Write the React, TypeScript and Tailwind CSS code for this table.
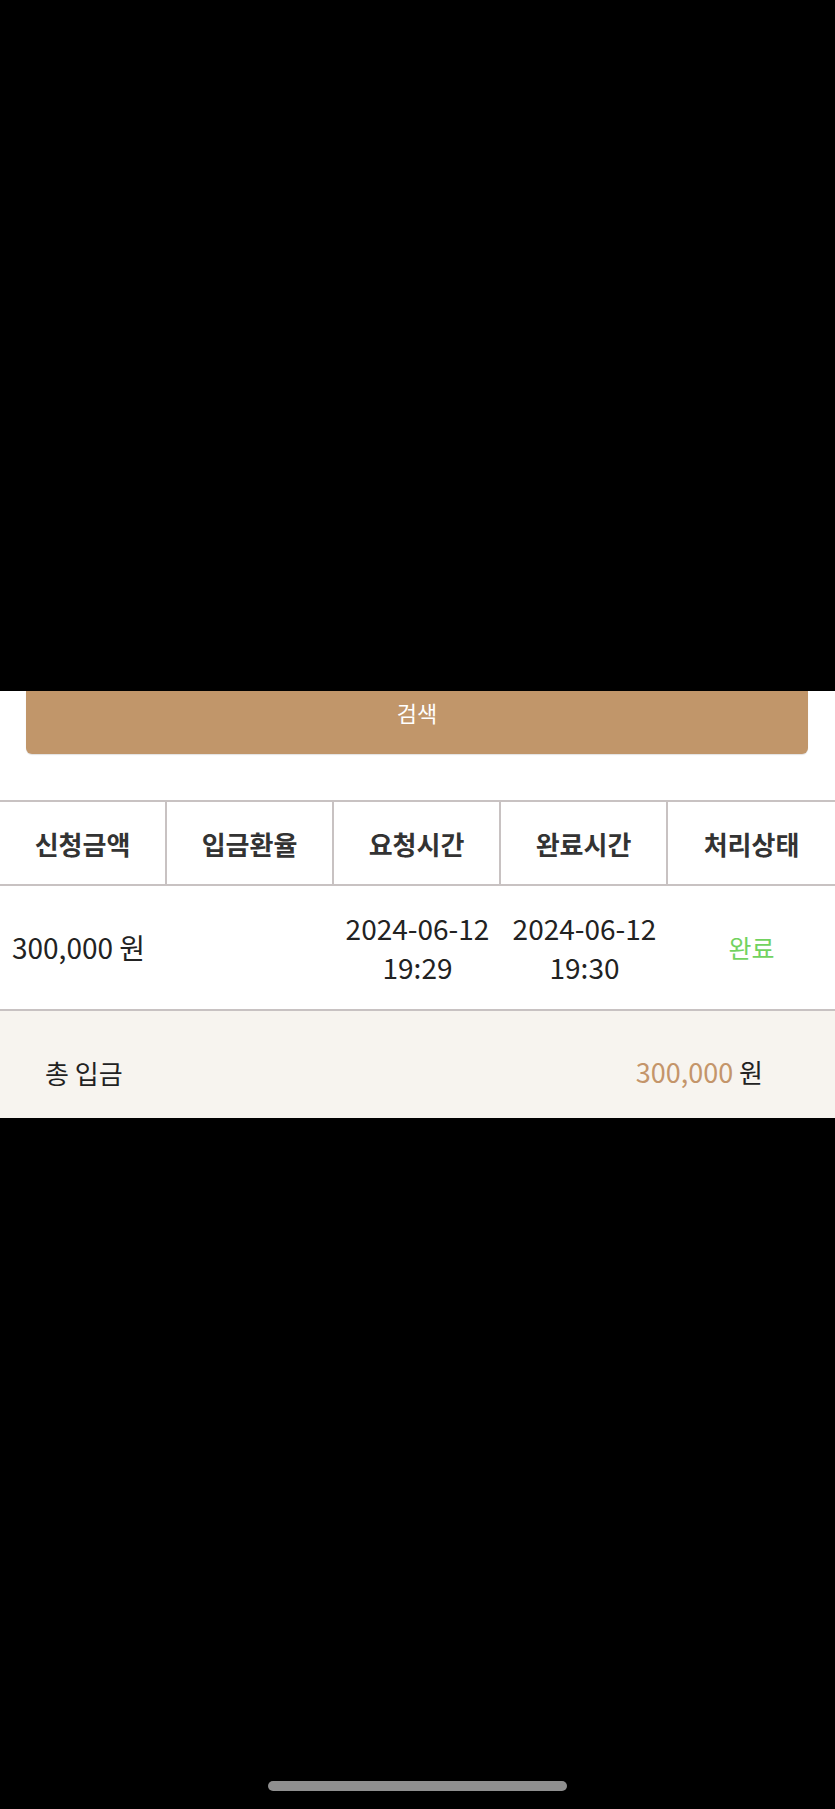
import React from "react";

const headers = ["신청금액", "입금환율", "요청시간", "완료시간", "처리상태"];

export default function App() {
  return (
    <div
      className="flex min-h-[1809px] w-[835px] flex-col bg-white"
      style={{ fontFamily: '"Noto Sans CJK KR", "Noto Sans", sans-serif' }}
    >
      {/* hidden area above */}
      <div className="h-[691px] bg-black" />

      {/* search button (top cut off) */}
      <div className="bg-white pl-[26px] pr-[27px]">
        <button className="flex h-[63px] w-full items-start justify-center rounded-b-[6px] bg-[#c1966a] pt-[5px] text-[22px] leading-[32px] text-white shadow-[0_1px_1px_rgba(0,0,0,0.12)]">
          검색
        </button>
      </div>

      <div className="h-[46px]" />

      {/* table */}
      <div className="border-t-2 border-[#c8c2c2]">
        <div className="grid h-[84px] grid-cols-5 border-b-2 border-[#c8c2c2]">
          {headers.map((h, i) => (
            <div
              key={h}
              className={
                i < 4
                  ? "flex items-center justify-center border-r-2 border-[#c8c2c2] text-[26px] font-bold text-[#333]"
                  : "flex items-center justify-center text-[26px] font-bold text-[#333]"
              }
            >
              {h}
            </div>
          ))}
        </div>

        <div className="grid h-[125px] grid-cols-5 border-b-2 border-[#c8c2c2] text-[28px] leading-[39px] text-[#222]">
          <div className="flex items-center whitespace-nowrap pl-[12px]">300,000 원</div>
          <div />
          <div className="flex flex-col items-center justify-center">
            <span>2024-06-12</span>
            <span>19:29</span>
          </div>
          <div className="flex flex-col items-center justify-center">
            <span>2024-06-12</span>
            <span>19:30</span>
          </div>
          <div className="flex items-center justify-center text-[25px] text-[#72d260]">완료</div>
        </div>
      </div>

      {/* total */}
      <div className="flex h-[107px] items-center justify-between bg-[#f7f4ef] pl-[45px] pr-[72px] pt-[16px] text-[26px] text-[#222]">
        <span>총 입금</span>
        <span>
          <span className="text-[27px] text-[#c4956a]">300,000</span> 원
        </span>
      </div>

      {/* hidden area below */}
      <div className="flex flex-1 flex-col items-center justify-end bg-black pb-[18px]">
        <div className="h-[10px] w-[299px] rounded-full bg-[#8f8f8f]" />
      </div>
    </div>
  );
}
